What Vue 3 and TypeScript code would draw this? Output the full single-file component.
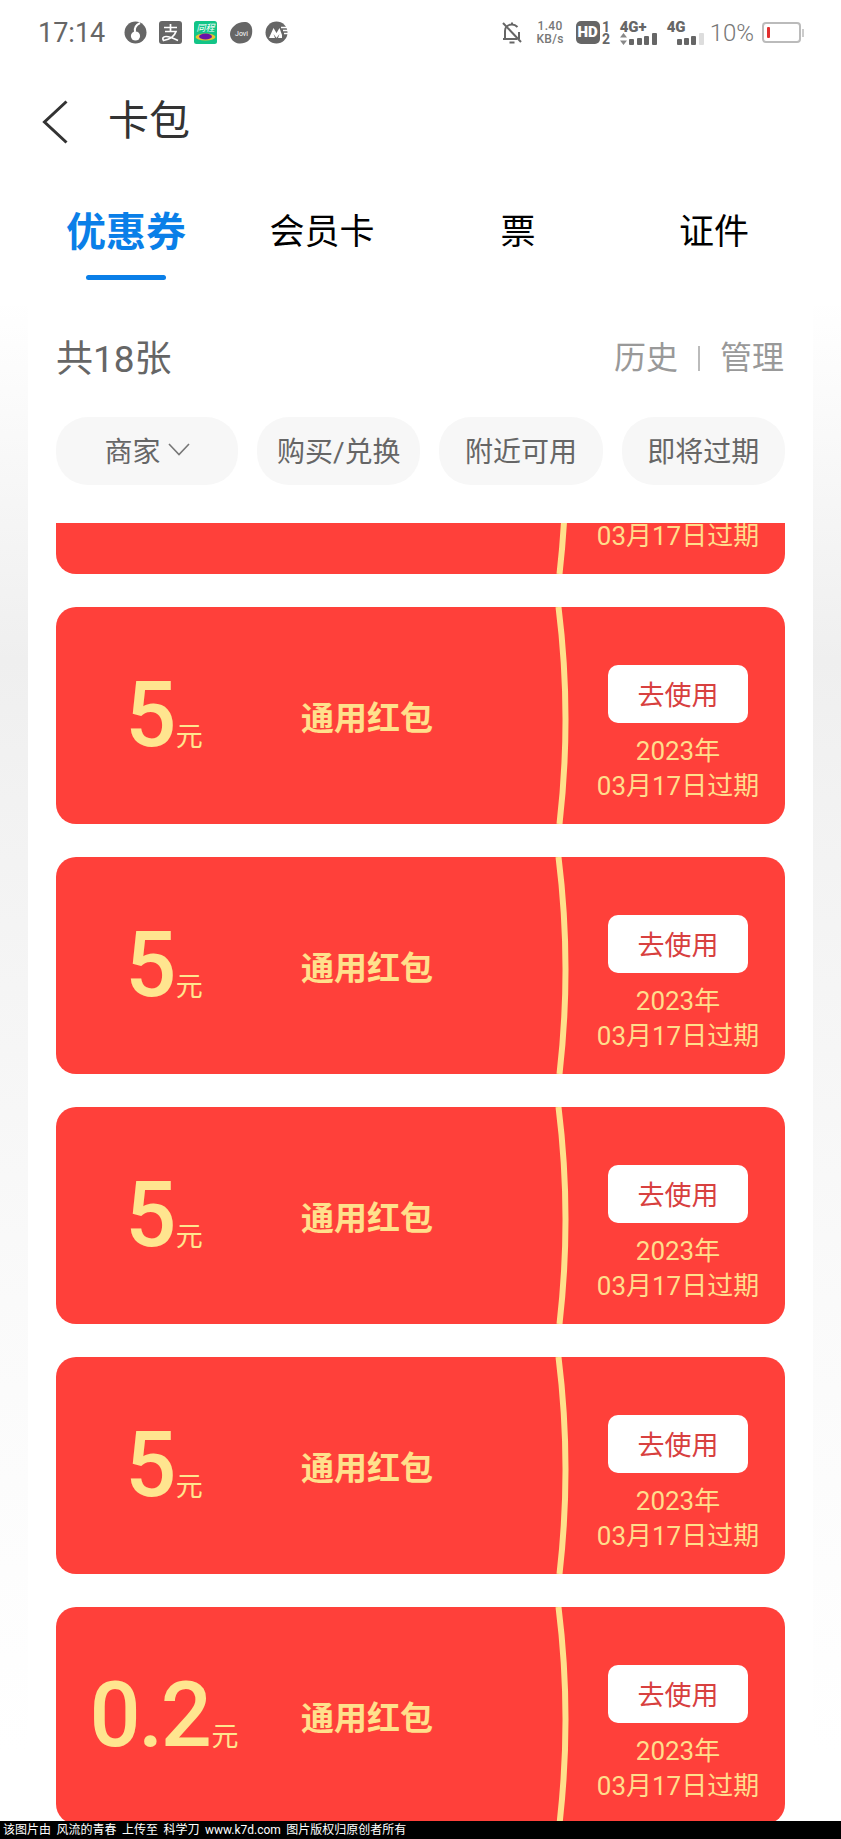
<script setup lang="ts">
interface Coupon {
  id: number
  amount: string
}

const tabs = ['优惠券', '会员卡', '票', '证件']
const filters = ['购买/兑换', '附近可用', '即将过期']
const coupons: Coupon[] = [
  { id: 1, amount: '5' },
  { id: 2, amount: '5' },
  { id: 3, amount: '5' },
  { id: 4, amount: '5' },
  { id: 5, amount: '5' },
  { id: 6, amount: '0.2' }
]
</script>

<template>
  <div class="page">
    <header class="status">
      <span class="time">17:14</span>
      <div class="apps">
        <svg width="23" height="23" viewBox="0 0 23 23">
          <circle cx="11.5" cy="11.5" r="11" fill="#666" />
          <circle cx="11.5" cy="15" r="4.6" fill="#fff" />
          <path d="M11 11 C10 7 12 4 16 2" stroke="#fff" stroke-width="2" fill="none" />
        </svg>
        <svg width="23" height="23" viewBox="0 0 23 23">
          <rect width="23" height="23" rx="3" fill="#666" />
          <path d="M5 6.5H18M11.5 3V10M6 10.5H17C15.5 15 11 18.5 4.5 19.5C3 17.5 4 15.5 7 15.5C11 15.5 15 17.5 19 19.5" stroke="#fff" stroke-width="1.7" fill="none" />
        </svg>
        <svg width="23" height="23" viewBox="0 0 23 23">
          <rect width="23" height="23" rx="2.5" fill="#12c487" />
          <text x="11.5" y="10" class="tc-text">同程</text>
          <ellipse cx="11.5" cy="16" rx="10" ry="3.5" fill="#e8c22e" />
          <ellipse cx="11.5" cy="15.5" rx="6.5" ry="3" fill="#6a14a8" />
        </svg>
        <svg width="24" height="23" viewBox="0 0 24 23">
          <path d="M1 13C1 6 9 0 17 1C22 2 24 7 23 13C22 19 17 23 10 22.500C5 22 1 18 1 13Z" fill="#666" />
          <text x="12.500" y="14.500" class="jovi-text">Jovi</text>
        </svg>
        <svg width="24" height="23" viewBox="0 0 24 23">
          <circle cx="11.500" cy="11.500" r="11" fill="#666" />
          <path d="M4 17L8.500 7L11.500 12L14.500 7L17 14V17H13L14.500 13L11.500 17L8.500 13L10 17Z" fill="#fff" />
          <path d="M16 6.500H24M18 9.500H24M19 12.500H24" stroke="#fff" stroke-width="1.300" />
        </svg>
      </div>
      <div class="sys">
        <svg class="bell" width="22" height="24" viewBox="0 0 22 24">
          <path d="M4 18V10C4 6 7 3.500 11 3.500C13 3.500 15 4.500 16.500 6M18 11V18M2 18H16M8.500 21.500H13.500M11 1.500V3.500" stroke="#666" stroke-width="2" fill="none" />
          <path d="M2 2L20 21" stroke="#666" stroke-width="2" />
        </svg>
        <div class="speed"><span>1.40</span><span>KB/s</span></div>
        <div class="hd">
          <span class="hd-box">HD</span>
          <span class="hd-sim"><span>1</span><span>2</span></span>
        </div>
        <div class="net net-first">
          <span class="net-label">4G+</span>
          <div class="bars">
            <svg width="7" height="12" viewBox="0 0 7 12"><path d="M3.500 0L7 4.500H0ZM3.500 12L0 7.500H7Z" fill="#888" /></svg>
            <i class="bar" style="height: 6px"></i>
            <i class="bar" style="height: 7px"></i>
            <i class="bar" style="height: 9px"></i>
            <i class="bar" style="height: 12px"></i>
          </div>
        </div>
        <div class="net net-second">
          <span class="net-label">4G</span>
          <div class="bars bars-right">
            <i class="bar" style="height: 6px"></i>
            <i class="bar" style="height: 7px"></i>
            <i class="bar" style="height: 9px"></i>
            <i class="bar bar-off" style="height: 12px"></i>
          </div>
        </div>
        <span class="percent">10%</span>
        <div class="battery"><i class="battery-level"></i></div>
        <i class="battery-cap"></i>
      </div>
    </header>

    <div class="nav">
      <svg class="back" width="26" height="44" viewBox="0 0 26 44">
        <path d="M24.500 1.500L2.500 22L24.500 42.500" stroke="#333" stroke-width="3" fill="none" />
      </svg>
      <h1 class="title">卡包</h1>
    </div>

    <nav class="tabs">
      <div v-for="(tab, index) in tabs" :key="tab" class="tab" :class="{ active: index === 0 }">
        {{ tab }}
      </div>
    </nav>

    <main class="panel">
      <div class="summary">
        <span class="count">共18张</span>
        <div class="actions">
          <span>历史</span>
          <i class="split"></i>
          <span>管理</span>
        </div>
      </div>

      <div class="filters">
        <div class="chip chip-wide">
          商家
          <svg width="22" height="13" viewBox="0 0 22 13">
            <path d="M1 1L11 11.500L21 1" stroke="#777" stroke-width="1.600" fill="none" />
          </svg>
        </div>
        <div v-for="filter in filters" :key="filter" class="chip">{{ filter }}</div>
      </div>

      <div class="list">
        <article v-for="coupon in coupons" :key="coupon.id" class="coupon">
          <div class="amount">
            <span class="value">{{ coupon.amount }}</span><span class="unit">元</span>
          </div>
          <div class="name">通用红包</div>
          <svg class="curve" width="24" height="217" viewBox="0 0 24 217">
            <path d="M5.500 0Q19 108 6.500 217" stroke="#ffe08c" stroke-width="6" fill="none" />
          </svg>
          <div class="use">
            <button class="use-btn" type="button">去使用</button>
            <div class="expire">2023年<br />03月17日过期</div>
          </div>
        </article>
      </div>
    </main>

    <footer class="credit">该图片由 风流的青春 上传至 科学刀 www.k7d.com 图片版权归原创者所有</footer>
  </div>
</template>

<style>
html,
body {
  margin: 0;
  padding: 0;
  background: #fff;
}
</style>

<style scoped>
.page {
  width: 841px;
  height: 1839px;
  display: flex;
  flex-direction: column;
  overflow: hidden;
  font-family: Roboto, "Noto Sans CJK SC", sans-serif;
  background: linear-gradient(to bottom, #fff 300px, #efefef 660px, #f2f2f2 800px, #fafafa 1300px, #fff 1750px);
}

.status {
  height: 65px;
  flex: none;
  display: flex;
  align-items: center;
  padding: 0 37px 0 38px;
  box-sizing: border-box;
  background: #fff;
}

.time {
  font-size: 27px;
  color: #666;
  width: 86px;
}

.apps {
  display: flex;
  gap: 12px;
  align-items: center;
}

.tc-text {
  font-size: 9px;
  font-style: italic;
  fill: #fff;
  text-anchor: middle;
}

.jovi-text {
  font-size: 7px;
  fill: #fff;
  text-anchor: middle;
}

.sys {
  margin-left: auto;
  display: flex;
  align-items: center;
  color: #666;
}

.bell {
  margin-right: 13px;
}

.speed {
  display: flex;
  flex-direction: column;
  align-items: center;
  font-size: 12px;
  line-height: 13px;
  font-weight: 500;
  letter-spacing: 0.3px;
  color: #777;
  margin-right: 12px;
}

.hd {
  display: flex;
  align-items: center;
  margin-right: 9px;
}

.hd-box {
  width: 24px;
  height: 23px;
  border-radius: 5px;
  background: #666;
  color: #fff;
  font-size: 15px;
  font-weight: 900;
  line-height: 23px;
  text-align: center;
}

.hd-sim {
  display: flex;
  flex-direction: column;
  width: 9px;
  margin-left: 2px;
  font-size: 14px;
  line-height: 12px;
  font-weight: 700;
  text-align: center;
}

.net {
  display: flex;
  flex-direction: column;
  height: 24px;
}

.net-first {
  width: 37px;
  margin-right: 10px;
}

.net-second {
  width: 37px;
  margin-right: 6px;
}

.net-label {
  font-size: 15px;
  line-height: 12px;
  font-weight: 900;
  color: #666;
}

.bars {
  display: flex;
  align-items: flex-end;
  gap: 2.5px;
  height: 12px;
}

.bars-right {
  padding-left: 10px;
}

.bar {
  width: 5px;
  border-radius: 1px;
  background: #666;
}

.bar-off {
  background: #ddd;
}

.percent {
  font-size: 24px;
  font-weight: 300;
  color: #777;
  margin-right: 8px;
}

.battery {
  width: 39px;
  height: 21px;
  box-sizing: border-box;
  border: 2px solid #bbb;
  border-radius: 4px;
  padding: 3px;
}

.battery-level {
  display: block;
  width: 3px;
  height: 11px;
  background: #e23030;
  border-radius: 1px;
}

.battery-cap {
  width: 2px;
  height: 8px;
  margin-left: 1px;
  background: #ccc;
}

.nav {
  height: 113px;
  flex: none;
  display: flex;
  align-items: center;
  padding-left: 42px;
  background: #fff;
}

.title {
  margin: 0 0 0 40px;
  font-size: 41px;
  font-weight: 400;
  color: #333;
  line-height: 1;
}

.tabs {
  height: 127px;
  flex: none;
  display: grid;
  grid-template-columns: repeat(4, 196px);
  padding-left: 28px;
  background: #fff;
}

.tab {
  position: relative;
  padding-top: 31px;
  font-size: 35px;
  line-height: 48px;
  color: #000;
  text-align: center;
}

.tab.active {
  color: #0a7fe8;
  font-size: 40px;
  font-weight: 700;
}

.tab.active::after {
  content: "";
  position: absolute;
  left: 58px;
  top: 97px;
  width: 80px;
  height: 5px;
  border-radius: 3px;
  background: #0a7fe8;
}

.panel {
  flex: 1;
  min-height: 0;
  margin: 0 28px;
  padding: 0 28px;
  background: #fff;
  display: flex;
  flex-direction: column;
}

.summary {
  display: flex;
  justify-content: space-between;
  align-items: center;
  padding-top: 30px;
  height: 50px;
}

.count {
  font-size: 37px;
  color: #666;
  line-height: 50px;
}

.actions {
  display: flex;
  align-items: center;
  gap: 20px;
  margin-bottom: 4px;
  margin-right: 1px;
  font-size: 32px;
  line-height: 50px;
  color: #999;
}

.split {
  width: 2px;
  height: 25px;
  background: #bbb;
}

.filters {
  display: flex;
  gap: 19px;
  margin-top: 32px;
}

.chip {
  flex: 1;
  height: 68px;
  box-sizing: border-box;
  padding-bottom: 3px;
  border-radius: 32px;
  background: #f7f7f7;
  display: flex;
  align-items: center;
  justify-content: center;
  gap: 7px;
  font-size: 28px;
  color: #666;
}

.chip-wide {
  flex: none;
  width: 182px;
}

.list {
  flex: 1;
  min-height: 0;
  overflow: hidden;
  margin-top: 38px;
}

.coupon {
  position: relative;
  display: flex;
  align-items: center;
  height: 217px;
  margin-bottom: 33px;
  border-radius: 20px;
  background: #ff403a;
  overflow: hidden;
}

.coupon:first-child {
  margin-top: -166px;
}

.amount {
  width: 216px;
  display: flex;
  align-items: baseline;
  justify-content: center;
  color: #ffe58f;
}

.value {
  font-size: 90px;
  font-weight: 500;
  letter-spacing: -2.5px;
  line-height: 100px;
}

.unit {
  margin-left: 2px;
  font-size: 27px;
  line-height: 30px;
}

.name {
  margin-left: 29px;
  font-size: 33px;
  font-weight: 700;
  color: #ffe08c;
}

.curve {
  position: absolute;
  left: 497px;
  top: 0;
}

.use {
  margin-left: auto;
  margin-right: 7px;
  width: 200px;
  padding-top: 37px;
  display: flex;
  flex-direction: column;
  align-items: center;
}

.use-btn {
  width: 140px;
  height: 58px;
  padding: 0;
  border: 0;
  border-radius: 10px;
  background: #fff;
  color: #d8403f;
  font-family: inherit;
  font-size: 27px;
}

.expire {
  margin-top: 11px;
  font-size: 26px;
  line-height: 35px;
  color: #ffdd8c;
  text-align: center;
  white-space: nowrap;
}

.credit {
  height: 18px;
  flex: none;
  background: #000;
  color: #fff;
  font-size: 12px;
  line-height: 18px;
  padding-left: 3px;
  word-spacing: 2.5px;
  white-space: nowrap;
}
</style>
